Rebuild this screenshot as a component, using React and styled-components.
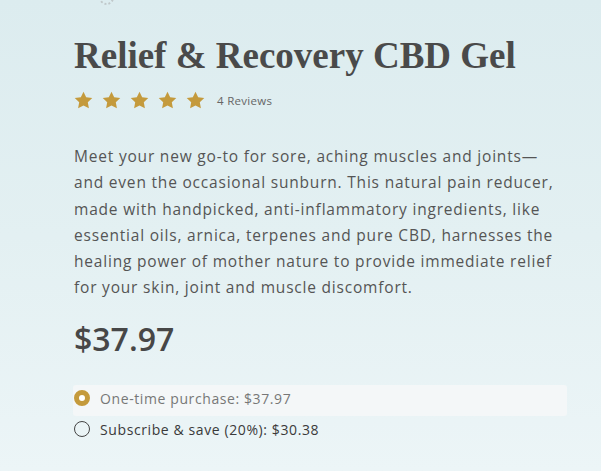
import React from 'react';
import styled, { createGlobalStyle } from 'styled-components';

const GlobalStyle = createGlobalStyle`
  html, body {
    margin: 0;
    padding: 0;
  }
  body {
    background: linear-gradient(180deg, #dcecef 0%, #e3f0f2 50%, #ecf5f7 100%);
    min-height: 471px;
    font-family: "Open Sans", "Liberation Sans", sans-serif;
  }
`;

const Page = styled.div`
  position: relative;
  width: 601px;
  height: 471px;
  overflow: hidden;
  padding: 36px 0 0 74px;
  box-sizing: border-box;
`;

const TopMark = styled.div`
  position: absolute;
  left: 99px;
  top: -10px;
  width: 11px;
  height: 11px;
  border-radius: 50%;
  border: 2px dotted #c0c8ca;
`;

const Title = styled.h1`
  margin: 0;
  font-family: "Liberation Serif", "DejaVu Serif", serif;
  font-weight: 700;
  font-size: 37px;
  line-height: 40px;
  color: #4a4a4a;
`;

const Rating = styled.div`
  display: flex;
  align-items: center;
  margin-top: 15px;
  gap: 9px;
`;

const Stars = styled.div`
  display: flex;
  gap: 9px;
`;

const Reviews = styled.span`
  font-size: 11.5px;
  letter-spacing: 0.3px;
  color: #666;
  margin-left: 3px;
`;

const Description = styled.p`
  margin: 34px 0 0;
  width: 500px;
  font-size: 15.5px;
  letter-spacing: 0.8px;
  line-height: 26.3px;
  color: #555;
`;

const Price = styled.div`
  margin-top: 18px;
  font-size: 32px;
  font-weight: 600;
  color: #474747;
  line-height: 40px;
`;

const Options = styled.div`
  margin-top: 26px;
  width: 494px;
  margin-left: -1px;
`;

const Option = styled.label`
  display: flex;
  align-items: center;
  gap: 10px;
  height: 31px;
  padding: 0 0 4px 1px;
  box-sizing: border-box;
  border-radius: 3px;
  background: ${(p) => (p.selected ? '#f4f7f8' : 'transparent')};
  color: ${(p) => (p.selected ? '#777' : '#3a3a3a')};
  font-size: 14px;
  letter-spacing: 0.6px;
`;

const Radio = styled.span`
  width: 16px;
  height: 16px;
  border-radius: 50%;
  box-sizing: border-box;
  flex-shrink: 0;
  border: ${(p) => (p.checked ? '5px solid #c49a3c' : '1.6px solid #444')};
  background: ${(p) => (p.checked ? '#fff' : 'transparent')};
`;

const Star = () => (
  <svg width="19" height="18" viewBox="0 0 24 23">
    <path
      d="M12 0.8l3.4 7.2 7.8 1-5.7 5.4 1.4 7.8L12 18.4l-6.9 3.8 1.4-7.8L0.8 9l7.8-1z"
      fill="#c49a3c"
    />
  </svg>
);

const App = () => (
  <>
    <GlobalStyle />
    <Page>
      <TopMark />
      <Title>Relief &amp; Recovery CBD Gel</Title>
      <Rating>
        <Stars>
          {[0, 1, 2, 3, 4].map((i) => <Star key={i} />)}
        </Stars>
        <Reviews>4 Reviews</Reviews>
      </Rating>
      <Description>
        Meet your new go-to for sore, aching muscles and joints—<br />
        and even the occasional sunburn. This natural pain reducer,<br />
        made with handpicked, anti-inflammatory ingredients, like<br />
        essential oils, arnica, terpenes and pure CBD, harnesses the<br />
        healing power of mother nature to provide immediate relief<br />
        for your skin, joint and muscle discomfort.
      </Description>
      <Price>$37.97</Price>
      <Options>
        <Option selected>
          <Radio checked />
          One-time purchase: $37.97
        </Option>
        <Option>
          <Radio />
          Subscribe &amp; save (20%): $30.38
        </Option>
      </Options>
    </Page>
  </>
);

export default App;
